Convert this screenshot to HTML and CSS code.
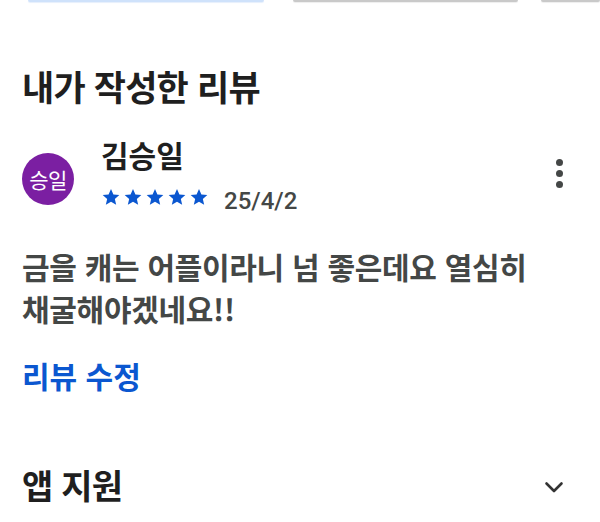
FILE: index.html
```html
<!DOCTYPE html>
<html lang="ko">
<head>
<meta charset="utf-8">
<link rel="stylesheet" href="styles.css">
</head>
<body>
<div class="page">
  <div class="chips">
    <div class="chip chip-blue"></div>
    <div class="chip chip-gray"></div>
    <div class="chip chip-gray chip-last"></div>
  </div>

  <h2 class="section-title">내가 작성한 리뷰</h2>

  <div class="review-head">
    <div class="avatar">승일</div>
    <div class="meta">
      <div class="name">김승일</div>
      <div class="rating-row">
        <div class="stars">
          <svg viewBox="0 0 24 24" class="star"><path d="M12 2.5l2.9 6.6 7.1.6-5.4 4.7 1.6 7L12 17.7l-6.2 3.7 1.6-7L2 9.7l7.1-.6z"/></svg>
          <svg viewBox="0 0 24 24" class="star"><path d="M12 2.5l2.9 6.6 7.1.6-5.4 4.7 1.6 7L12 17.7l-6.2 3.7 1.6-7L2 9.7l7.1-.6z"/></svg>
          <svg viewBox="0 0 24 24" class="star"><path d="M12 2.5l2.9 6.6 7.1.6-5.4 4.7 1.6 7L12 17.7l-6.2 3.7 1.6-7L2 9.7l7.1-.6z"/></svg>
          <svg viewBox="0 0 24 24" class="star"><path d="M12 2.5l2.9 6.6 7.1.6-5.4 4.7 1.6 7L12 17.7l-6.2 3.7 1.6-7L2 9.7l7.1-.6z"/></svg>
          <svg viewBox="0 0 24 24" class="star"><path d="M12 2.5l2.9 6.6 7.1.6-5.4 4.7 1.6 7L12 17.7l-6.2 3.7 1.6-7L2 9.7l7.1-.6z"/></svg>
        </div>
        <span class="date">25/4/2</span>
      </div>
    </div>
    <div class="kebab">
      <span class="dot"></span><span class="dot"></span><span class="dot"></span>
    </div>
  </div>

  <p class="review-text">금을 캐는 어플이라니 넘 좋은데요 열심히 채굴해야겠네요!!</p>

  <div class="edit-link">리뷰 수정</div>

  <div class="support">
    <h2 class="section-title support-title">앱 지원</h2>
    <svg class="chevron" viewBox="0 0 24 24"><path d="M4.5 8.5l7.5 7.5 7.5-7.5" fill="none" stroke="#333" stroke-width="2.6" stroke-linecap="round" stroke-linejoin="round"/></svg>
  </div>
</div>
</body>
</html>
```

FILE: styles.css
```css
* { box-sizing: border-box; }
html, body { margin: 0; padding: 0; background: #fff; }
body {
  font-family: "Noto Sans CJK KR", "Noto Sans", "Liberation Sans", sans-serif;
  color: #1f1f1f;
  width: 600px;
  height: 522px;
  overflow: hidden;
}
.page { padding: 0 0 0 22px; }

.chips {
  display: flex;
  height: 4px;
  margin-left: 6px;
}
.chip {
  height: 2px;
  border-radius: 0 0 10px 10px;
}
.chip-blue { width: 240px; background: #cfe2fb; box-shadow: 0 1px 1px #e6effc; }
.chip-gray { width: 228px; margin-left: 29px; background: #c9c9c9; box-shadow: 0 1px 1px #eee; }
.chip-last { width: 60px; margin-left: 23px; }

.section-title {
  margin: 0;
  font-size: 35px;
  font-weight: 700;
  line-height: 44px;
  color: #1f1f1f;
  letter-spacing: -0.8px;
}
.page > .section-title { margin-top: 60px; }

.review-head {
  display: flex;
  align-items: center;
  margin-top: 28px;
  padding-right: 37px;
}
.avatar {
  width: 52px;
  height: 52px;
  border-radius: 50%;
  background: #7b1fa2;
  color: #fff;
  font-size: 21px;
  display: flex;
  align-items: center;
  justify-content: center;
  flex: none;
  letter-spacing: -0.5px;
  margin-top: 6px;
}
.meta { margin-left: 27px; flex: 1; }
.name {
  font-size: 30px;
  font-weight: 700;
  line-height: 36px;
  color: #1f1f1f;
}
.rating-row {
  display: flex;
  align-items: center;
  margin-top: 7px;
}
.stars { display: flex; gap: 2px; }
.star { width: 20px; height: 20px; fill: #0b57d0; }
.date {
  margin-left: 15px;
  font-family: "Roboto", "Noto Sans", sans-serif;
  font-size: 24px;
  font-weight: 500;
  color: #444746;
  line-height: 28px;
  margin-top: 8px;
}
.kebab {
  display: flex;
  flex-direction: column;
  gap: 4px;
  margin-top: -4px;
}
.dot { width: 7px; height: 7px; border-radius: 50%; background: #444746; }

.review-text {
  margin: 30px 30px 0 0;
  font-size: 30px;
  font-weight: 700;
  line-height: 42px;
  color: #444746;
  letter-spacing: -0.3px;
  word-break: keep-all;
}
.edit-link {
  margin-top: 28px;
  font-size: 30px;
  font-weight: 700;
  line-height: 36px;
  color: #0b57d0;
}
.support {
  display: flex;
  align-items: center;
  justify-content: space-between;
  margin-top: 70px;
  padding-right: 34px;
}
.support-title { font-size: 34px; }
.chevron { width: 24px; height: 24px; margin-top: 4px; }
```
